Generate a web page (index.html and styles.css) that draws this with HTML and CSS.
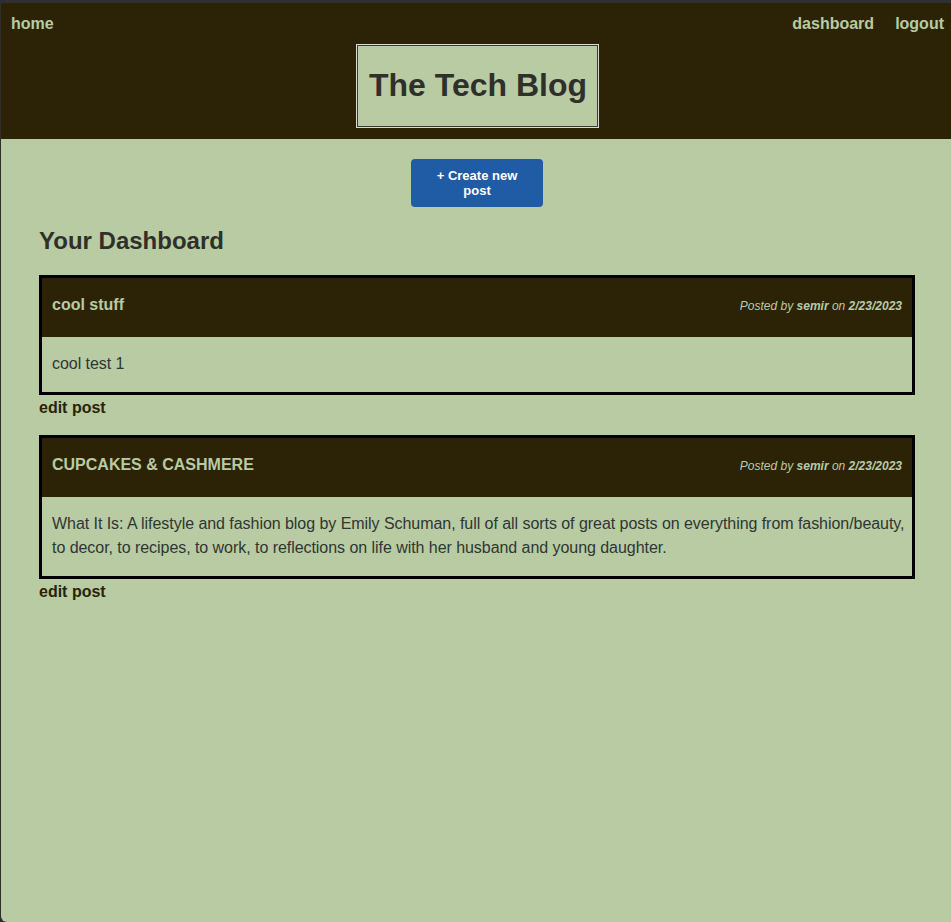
FILE: index.html
```html
<!DOCTYPE html>
<html lang="en">
<head>
<meta charset="utf-8">
<title>The Tech Blog</title>
<link rel="stylesheet" href="styles.css">
</head>
<body>
<div class="page">
  <header class="site-header">
    <nav class="nav">
      <a class="nav-link" href="#">home</a>
      <div class="nav-right">
        <a class="nav-link" href="#">dashboard</a>
        <a class="nav-link" href="#">logout</a>
      </div>
    </nav>
    <h1 class="title">The Tech Blog</h1>
  </header>
  <main class="main">
    <div class="create-wrap">
      <button class="create-btn">+ Create new post</button>
    </div>
    <h2 class="dash-title">Your Dashboard</h2>

    <article class="post">
      <div class="post-head">
        <span class="post-title">cool stuff</span>
        <span class="post-meta">Posted by <b>semir</b> on <b>2/23/2023</b></span>
      </div>
      <div class="post-body">cool test 1</div>
    </article>
    <a class="edit-link" href="#">edit post</a>

    <article class="post">
      <div class="post-head">
        <span class="post-title">CUPCAKES &amp; CASHMERE</span>
        <span class="post-meta">Posted by <b>semir</b> on <b>2/23/2023</b></span>
      </div>
      <div class="post-body">What It Is: A lifestyle and fashion blog by Emily Schuman, full of all sorts of great posts on everything from fashion/beauty, to decor, to recipes, to work, to reflections on life with her husband and young daughter.</div>
    </article>
    <a class="edit-link" href="#">edit post</a>
  </main>
</div>
</body>
</html>
```

FILE: styles.css
```css
html {
  margin: 0;
  padding: 0;
  background: #2f2e33;
  height: 100%;
}
body {
  margin: 0;
  padding: 3px 0 0 1px;
  min-height: 100%;
  box-sizing: border-box;
  font-family: "Liberation Sans", Arial, sans-serif;
  display: flex;
  flex-direction: column;
}
.page {
  flex: 1;
  background: #b8cba3;
  border-bottom-left-radius: 6px;
  display: flex;
  flex-direction: column;
}
.site-header {
  background: #2c2306;
  padding: 12px 7px 11px 10px;
  display: flex;
  flex-direction: column;
  align-items: center;
}
.nav {
  align-self: stretch;
  display: flex;
  justify-content: space-between;
  line-height: 18px;
}
.nav-right {
  display: flex;
  gap: 21px;
}
.nav-link {
  color: #b8cba3;
  font-weight: bold;
  font-size: 16px;
  text-decoration: none;
}
.title {
  margin: 11px 0 0 0;
  background: #b8cba3;
  color: #2f302c;
  font-size: 32px;
  line-height: 37px;
  padding: 22px 11px 23px 12px;
  border: 1px solid #d6dccf;
  box-shadow: inset 0 0 0 1px #3a3a36;
}
.main {
  padding: 20px 36px 0 38px;
  display: flex;
  flex-direction: column;
}
.create-wrap {
  display: flex;
  justify-content: center;
}
.create-btn {
  width: 132px;
  height: 48px;
  background: #205ba6;
  color: #ffffff;
  border: none;
  border-radius: 4px;
  font-family: "Liberation Sans", Arial, sans-serif;
  font-weight: bold;
  font-size: 13px;
  line-height: 15px;
  padding: 8px 24px;
}
.dash-title {
  margin: 20px 0 20px 0;
  font-size: 24px;
  line-height: 28px;
  color: #2f302c;
}
.post {
  border: 3px solid #000000;
}
.post-head {
  background: #2c2306;
  display: flex;
  justify-content: space-between;
  align-items: baseline;
  padding: 18px 10px 22px 10px;
  line-height: 18px;
}
.post-title {
  color: #b8cba3;
  font-weight: bold;
  font-size: 16px;
}
.post-meta {
  color: #b8cba3;
  font-style: italic;
  font-size: 12px;
}
.post-body {
  padding: 15px 0 16px 10px;
  font-size: 16px;
  line-height: 24px;
  letter-spacing: -0.05px;
  color: #2f3633;
}
.edit-link {
  display: block;
  margin: 4px 0 18px 0;
  line-height: 18px;
  font-size: 16px;
  font-weight: bold;
  color: #2c2306;
  text-decoration: none;
}
```
